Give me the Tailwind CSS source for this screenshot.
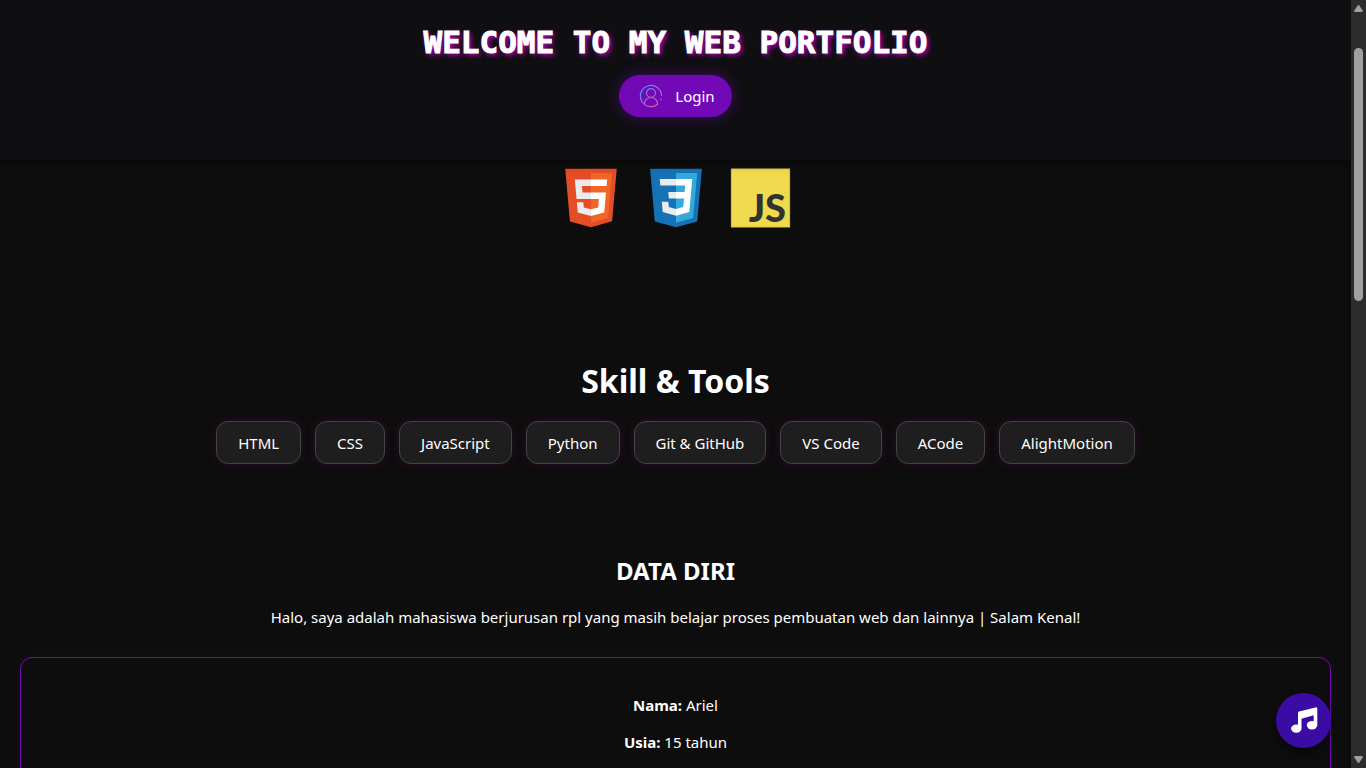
<!DOCTYPE html>
<html lang="id">
<head>
<meta charset="utf-8">
<meta name="viewport" content="width=device-width, initial-scale=1">
<title>Web Portfolio</title>
<script src="https://cdn.jsdelivr.net/npm/@tailwindcss/browser@4"></script>
</head>
<body class="flex h-screen overflow-hidden bg-[#0d0d0d] font-['Segoe_UI','Noto_Sans',sans-serif] text-[15px] leading-[21px] text-white">
<div class="relative flex min-w-0 flex-1 flex-col overflow-hidden">
  <header class="relative z-10 flex h-40 shrink-0 flex-col items-center bg-[#0f0f11] pt-6 shadow-[0_2px_10px_rgba(0,0,0,0.5)]">
    <h1 class="font-['DejaVu_Sans_Mono',monospace] text-[31px] leading-9 font-bold whitespace-nowrap [-webkit-text-stroke:1px_#fff] [text-shadow:2px_2px_5px_#c800c8]">WELCOME TO MY WEB PORTFOLIO</h1>
    <button type="button" class="mt-[15px] flex h-[42px] items-center gap-3 rounded-full bg-[#7209b7] pr-[17px] pl-5 text-[15px] shadow-[0_0_15px_rgba(114,9,183,0.5)]">
      <svg class="size-6" viewBox="0 0 24 24" fill="none" stroke="url(#user)" stroke-width="1.200" aria-hidden="true">
        <defs><linearGradient id="user" x1="2" y1="2" x2="20" y2="22" gradientUnits="userSpaceOnUse"><stop stop-color="#25b9e8"/><stop offset=".5" stop-color="#9868d6"/><stop offset="1" stop-color="#f052a8"/></linearGradient></defs>
        <path d="M22.600 12A10.600 10.600 0 1 0 19 20M22.300 14.500l-.4 1.500"/>
        <circle cx="12" cy="9" r="4.400"/>
        <path d="M5.500 20v-.7a6.500 5.800 0 0 1 13 0v.7"/>
      </svg>
      <span class="pt-px">Login</span>
    </button>
  </header>
  <main class="flex flex-1 flex-col text-center">
    <section class="flex justify-center gap-[25px] pt-2" aria-label="Bahasa">
      <svg class="size-[60px]" viewBox="0 0 128 128" role="img" aria-label="HTML5">
        <path fill="#E44D26" d="M19.037 113.876L9.032 1.661h109.936l-10.016 112.198-45.019 12.480z"/>
        <path fill="#F16529" d="M64 116.800l36.378-10.086 8.559-95.878H64z"/>
        <path fill="#EBEBEB" d="M64 52.455H45.788L44.530 38.361H64V24.599H29.489l.33 3.692 3.382 37.927H64zm0 35.743l-.061.017-15.327-4.140-.979-10.975H33.816l1.928 21.609 28.193 7.826.063-.017z"/>
        <path fill="#fff" d="M63.952 52.455v13.763h16.947l-1.597 17.849-15.350 4.143v14.319l28.215-7.820.207-2.325 3.234-36.233.335-3.696h-3.708zm0-27.856v13.762h33.244l.276-3.092.628-6.978.329-3.692z"/>
      </svg>
      <svg class="size-[60px]" viewBox="0 0 128 128" role="img" aria-label="CSS3">
        <path fill="#1572B6" d="M18.814 114.123L8.760 1.352h110.480l-10.064 112.754-45.243 12.543z"/>
        <path fill="#33A9DC" d="M64.001 117.062l36.559-10.136 8.601-96.354h-45.160z"/>
        <path fill="#fff" d="M64.001 51.429h18.302l1.264-14.163H64.001V23.435h34.682l-.332 3.711-3.400 38.114h-30.950z"/>
        <path fill="#EBEBEB" d="M64.083 87.349l-.061.018-15.403-4.159-.985-11.031H33.752l1.937 21.717 28.331 7.863.063-.018z"/>
        <path fill="#fff" d="M81.127 64.675l-1.666 18.522-15.426 4.164v14.390l28.354-7.858.208-2.337 2.406-26.881z"/>
        <path fill="#EBEBEB" d="M64.048 23.435v13.831H30.640l-.277-3.108-.630-7.012-.331-3.711zm-.047 27.996v13.831H48.792l-.277-3.108-.631-7.012-.330-3.711z"/>
      </svg>
      <svg class="size-[60px] overflow-visible" viewBox="0 0 60 60" role="img" aria-label="JavaScript">
        <path fill="#F0DB4F" stroke="#6e6530" stroke-width=".5" d="M0 .6h59v58.800H0z"/>
        <text x="55" y="54" text-anchor="end" fill="#323330" class="font-['Lato',sans-serif] text-[38px] font-black">JS</text>
      </svg>
    </section>

    <section class="pt-[133px]">
      <h2 class="text-[32px] leading-10 font-bold">Skill &amp; Tools</h2>
      <ul class="mt-5 flex justify-center gap-[14px] whitespace-nowrap *:rounded-xl *:border *:border-[#444] *:bg-[#1e1e1e] *:px-[21px] *:pt-[11px] *:pb-[9px] *:shadow-[0_0_10px_rgba(200,0,200,0.15)]">
        <li>HTML</li><li>CSS</li><li>JavaScript</li><li>Python</li><li>Git &amp; GitHub</li><li>VS Code</li><li>ACode</li><li>AlightMotion</li>
      </ul>
    </section>

    <section class="px-5 pt-[91px]">
      <h2 class="text-2xl leading-8 font-bold">DATA DIRI</h2>
      <p class="mt-5">Halo, saya adalah mahasiswa berjurusan rpl yang masih belajar proses pembuatan web dan lainnya | Salam Kenal!</p>
      <div class="mt-[29px] h-80 space-y-4 rounded-xl border border-[#7209b7] pt-[37px] shadow-[0_0_20px_rgba(255,255,255,0.03)]">
        <p><strong>Nama:</strong> Ariel</p>
        <p><strong>Usia:</strong> 15 tahun</p>
      </div>
    </section>
  </main>
  <button type="button" aria-label="Musik" class="absolute right-5 bottom-5 z-20 grid size-[55px] place-items-center rounded-full bg-[#3a0ca3] shadow-[0_4px_10px_rgba(0,0,0,0.5)]">
    <svg class="size-7" viewBox="0 0 28 28" fill="#fff" aria-hidden="true">
      <path d="M8 6Q8 4.900 9 4.600L25.500.4Q27.300 0 27.300 1.700V18H23.700V8.200L11.500 11.800V21H8z"/>
      <ellipse cx="6.300" cy="21.600" rx="5.200" ry="4.200"/><ellipse cx="22" cy="18.300" rx="5.200" ry="4.200"/>
    </svg>
  </button>
</div>
<div class="flex w-[15px] shrink-0 flex-col items-center bg-[#2c2c2c] py-[5px]" aria-hidden="true">
  <svg class="h-[7px] w-[9px]" viewBox="0 0 9 7" fill="#a0a0a0"><path d="M3.700.5Q4.500-.5 5.300.5L8.700 5.500Q9.300 7 8 7H1Q-.3 7 .3 5.500z"/></svg>
  <div class="mt-9 h-[253px] w-[9px] rounded-full bg-[#a0a0a0]"></div>
  <svg class="mt-auto h-[7px] w-[9px]" viewBox="0 0 9 7" fill="#a0a0a0"><path d="M3.700 6.500Q4.500 7.500 5.300 6.500L8.700 1.500Q9.300 0 8 0H1Q-.3 0 .3 1.500z"/></svg>
</div>
</body>
</html>
